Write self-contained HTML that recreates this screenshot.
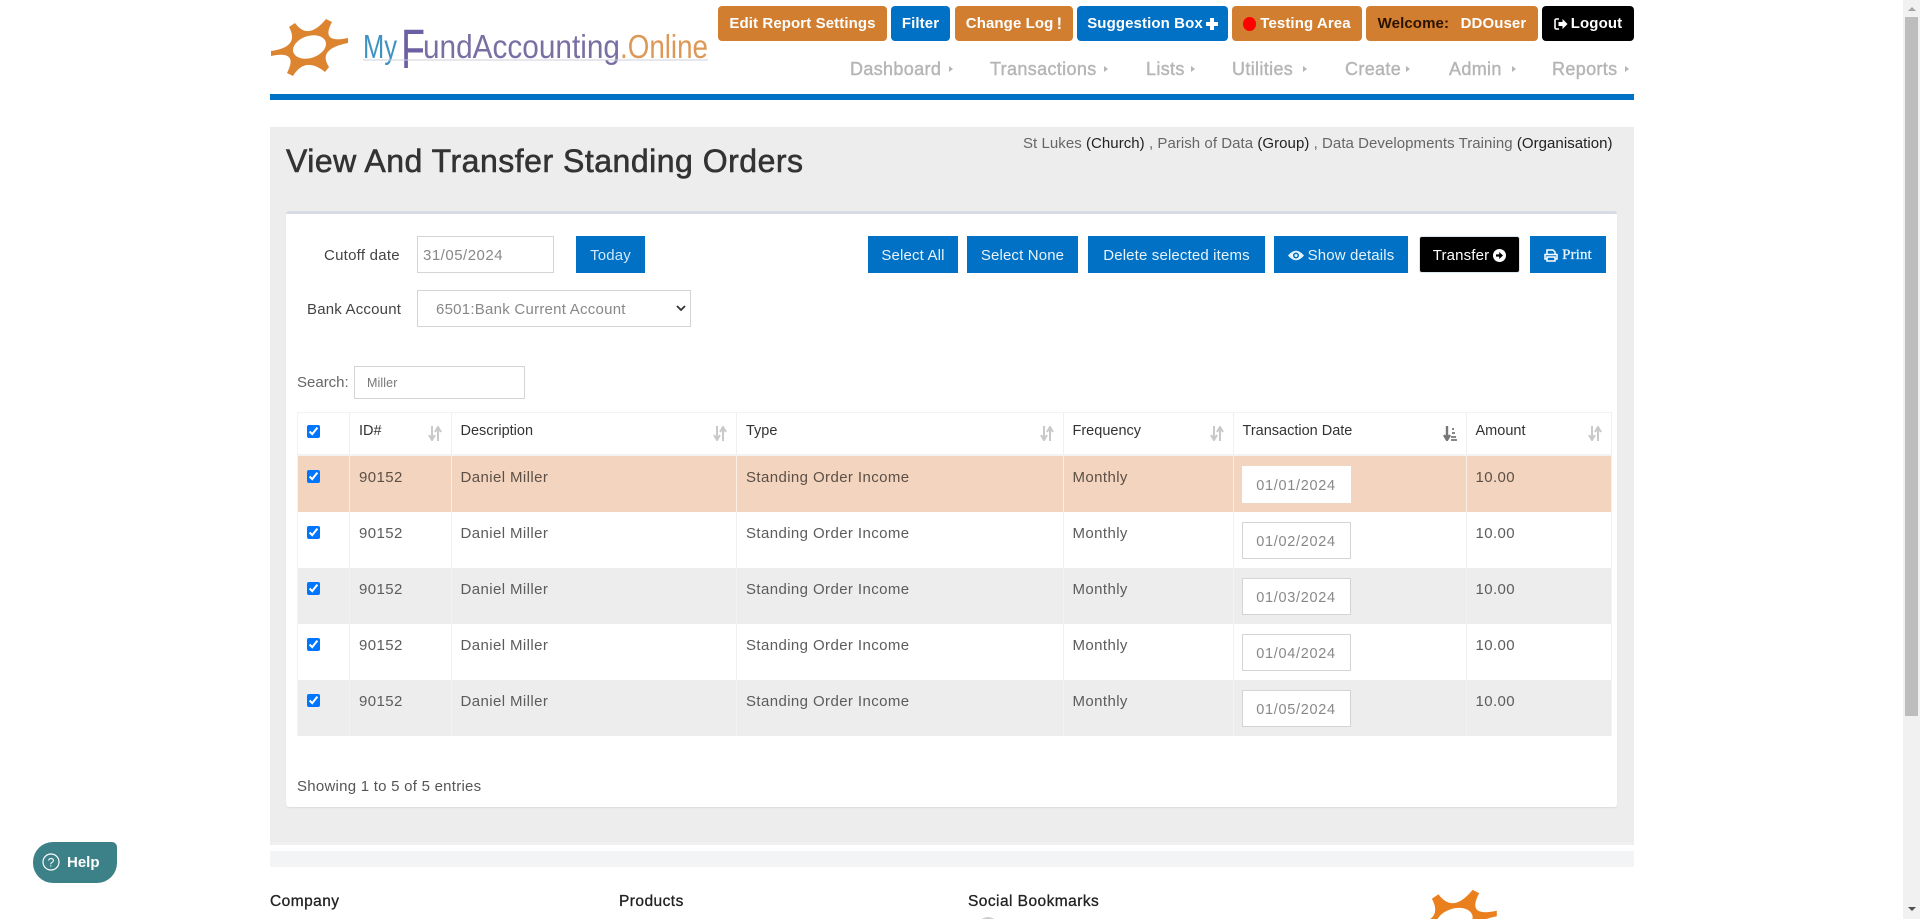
<!DOCTYPE html>
<html lang="en"><head><meta charset="utf-8"><title>View And Transfer Standing Orders</title>
<style>
*{box-sizing:border-box}
html,body{margin:0;padding:0;width:1920px;height:919px;overflow:hidden;background:#fff;font-family:"Liberation Sans",sans-serif;color:#444}
#w{position:relative;width:1920px;height:919px;overflow:hidden;background:#fff}
.a{position:absolute}
.t{position:absolute;white-space:nowrap;line-height:20px;height:20px}
.tb{position:absolute;top:6px;height:35px;border-radius:4px;color:#fff;font-weight:bold;font-size:15px;letter-spacing:.1px;display:flex;align-items:center;justify-content:center;white-space:nowrap;gap:3px;text-decoration:none}
.o{background:#d17e30}.b{background:#0071c5}.k{background:#000}
.nav{position:absolute;top:59px;line-height:20px;font-size:18px;color:#b5b5b5;white-space:nowrap;-webkit-text-stroke:.4px #b5b5b5;letter-spacing:.35px}
.ar{position:absolute;top:66px;width:0;height:0;border-left:4px solid #b5b5b5;border-top:3.5px solid transparent;border-bottom:3.5px solid transparent}
.btn{position:absolute;top:236px;height:37px;padding-top:1px;background:#0071c5;color:#e6f3fb;font-size:15px;letter-spacing:.15px;display:flex;align-items:center;justify-content:center;white-space:nowrap;gap:4px}
.inp{position:absolute;background:#fff;border:1px solid #d4d4d4;color:#888;font-size:15px;letter-spacing:.5px}
table{position:absolute;left:297px;top:412px;width:1315px;border-collapse:separate;border-spacing:0;table-layout:fixed;font-size:15px;letter-spacing:.4px}
th{height:44px;font-size:14.5px;letter-spacing:0;font-weight:normal;text-align:left;vertical-align:top;padding:8px 0 0 9px;color:#333;border-top:1px solid #f3f3f3;border-right:1px solid #f0f0f0;border-bottom:2px solid #f3f3f3;position:relative;line-height:20px}
th:first-child,td:first-child{border-left:1px solid #f3f3f3}
td{height:56px;vertical-align:top;padding:12px 0 0 9px;color:#5c5c5c;border-right:1px solid #f0f0f0;position:relative;line-height:20px}
tr.p td{background:#f3d5bf;border-right-color:#fbeee4;color:#5c4f46}
tr.g td{background:#eeedee;border-right-color:#f3f3f3}
input[type=checkbox]{position:absolute;left:9px;margin:0;width:13px;height:13px;accent-color:#0075ff}
.d{position:absolute;left:8px;top:10px;width:109px;height:37px;background:#fff;border:1px solid #d4d4d4;color:#888;text-align:center;line-height:35px;padding-top:2px;font-size:14.5px;letter-spacing:.7px}
tr.p .d{border-color:#fff}
.s{position:absolute;top:13px;right:9px}
.f{position:absolute;top:892px;white-space:nowrap;line-height:20px;font-size:15.5px;color:#222;-webkit-text-stroke:.3px #222;letter-spacing:.45px}
</style></head><body>
<div id="w">

<!-- logo -->
<svg class="a" style="left:270px;top:10px" width="450" height="70" viewBox="0 0 450 70">
<path d="M25 13Q38 31 56 9L62 12Q50 34 78 28L78 33Q47 39 59 57L55 62Q35 46 23 66L17 63Q29 40 1 46L1 41Q30 37 19 17Z" fill="#dc8430"/>
<ellipse cx="39.5" cy="37" rx="17" ry="11" transform="rotate(-18 39.5 37)" fill="#fff"/>
<text x="93" y="48" font-size="33" fill="#3f93c4" textLength="34" lengthAdjust="spacingAndGlyphs">My</text>
<text x="131" y="58" font-size="56" fill="#6c5fa2" textLength="24" lengthAdjust="spacingAndGlyphs">F</text>
<text x="153" y="48" font-size="33" fill="#7a6fa3" textLength="197" lengthAdjust="spacingAndGlyphs">undAccounting</text>
<text x="350" y="48" font-size="33" fill="#dd9858" textLength="88" lengthAdjust="spacingAndGlyphs">.Online</text>
<rect x="93" y="49.5" width="345" height="1" fill="#cdd0de"/>
</svg>

<!-- top buttons -->
<a class="tb o" style="left:718px;width:169px">Edit Report Settings</a>
<a class="tb b" style="left:891px;width:59px">Filter</a>
<a class="tb o" style="left:955px;width:118px">Change Log <b style="font-size:17px">!</b></a>
<a class="tb b" style="left:1077px;width:151px">Suggestion Box<svg width="12" height="12" viewBox="0 0 12 12"><path d="M4 0h4v4h4v4H8v4H4V8H0V4h4z" fill="#fff"/></svg></a>
<a class="tb o" style="left:1232px;width:130px;gap:4px"><span style="width:13px;height:14px;border-radius:50%;background:#f00"></span>Testing Area</a>
<a class="tb o" style="left:1366px;width:172px"><span style="color:#2a1200">Welcome:</span>&nbsp;&nbsp;DDOuser</a>
<a class="tb k" style="left:1542px;width:92px"><svg width="14" height="12" viewBox="0 0 14 12"><path d="M5 1H2.5Q1 1 1 2.5v7Q1 11 2.5 11H5" fill="none" stroke="#fff" stroke-width="1.6"/><path d="M4.5 4h4V1l5 5-5 5V8h-4z" fill="#fff"/></svg>Logout</a>

<!-- nav -->
<span class="nav" style="left:850px">Dashboard</span><i class="ar" style="left:949px"></i>
<span class="nav" style="left:990px">Transactions</span><i class="ar" style="left:1104px"></i>
<span class="nav" style="left:1146px">Lists</span><i class="ar" style="left:1191px"></i>
<span class="nav" style="left:1232px">Utilities</span><i class="ar" style="left:1303px"></i>
<span class="nav" style="left:1345px">Create</span><i class="ar" style="left:1406px"></i>
<span class="nav" style="left:1449px">Admin</span><i class="ar" style="left:1512px"></i>
<span class="nav" style="left:1552px">Reports</span><i class="ar" style="left:1625px"></i>

<div class="a" style="left:270px;top:94px;width:1364px;height:6px;background:#0071c5"></div>

<!-- panel -->
<div class="a" style="left:270px;top:127px;width:1364px;height:715px;background:#eeedee"></div>
<div class="a" style="left:270px;top:842px;width:1364px;height:3px;background:#f1f0f1"></div>
<div class="a" style="left:270px;top:851px;width:1364px;height:16px;background:#f3f4f6"></div>

<div class="t" style="left:286px;top:141px;height:40px;line-height:40px;font-size:32px;color:#333;-webkit-text-stroke:.6px #333;letter-spacing:.5px">View And Transfer Standing Orders</div>
<div class="t" style="left:1023px;top:134px;font-size:15px;color:#666;letter-spacing:.05px">St Lukes <span style="color:#222">(Church)</span> , Parish of Data <span style="color:#222">(Group)</span> , Data Developments Training <span style="color:#222">(Organisation)</span></div>

<!-- card -->
<div class="a" style="left:286px;top:211px;width:1331px;height:596px;background:#fff;border-top:3px solid #d8dbe3;border-radius:3px;box-shadow:0 1px 1px #ddd"></div>

<div class="t" style="left:324px;top:246px;font-size:15px;color:#444;letter-spacing:.25px">Cutoff date</div>
<div class="inp" style="left:417px;top:236px;width:137px;height:37px;padding:1px 5px 0;line-height:35px">31/05/2024</div>
<div class="btn" style="left:576px;width:69px;color:#cfe8fa">Today</div>
<div class="t" style="left:307px;top:300px;font-size:15px;color:#444;letter-spacing:.2px">Bank Account</div>
<div class="inp" style="left:417px;top:290px;width:274px;height:37px;padding:1px 18px 0;line-height:35px;letter-spacing:.25px">6501:Bank Current Account
<svg class="a" style="left:258px;top:14px" width="10" height="7" viewBox="0 0 10 7"><path d="M1 1l4 4 4-4" fill="none" stroke="#333" stroke-width="1.8"/></svg></div>

<div class="btn" style="left:868px;width:90px">Select All</div>
<div class="btn" style="left:967px;width:111px">Select None</div>
<div class="btn" style="left:1088px;width:177px">Delete selected items</div>
<div class="btn" style="left:1274px;width:134px"><svg width="16" height="11" viewBox="0 0 16 11"><path d="M0 5.5Q8-4 16 5.5 8 15 0 5.5z" fill="#e6f3fb"/><circle cx="8" cy="5.5" r="3" fill="#0071c5"/><circle cx="8" cy="5.5" r="1.5" fill="#e6f3fb"/></svg>Show details</div>
<div class="btn" style="left:1420px;top:237px;width:99px;height:35px;background:#000;color:#fff;border-radius:2px;box-shadow:0 0 0 1px #d8e6ee">Transfer<svg width="13" height="13" viewBox="0 0 13 13"><circle cx="6.5" cy="6.5" r="6.5" fill="#fff"/><path d="M3 5.4h3.2V3l3.8 3.5L6.2 10V7.6H3z" fill="#000"/></svg></div>
<div class="btn" style="left:1530px;width:76px;font-family:'Liberation Serif',serif;font-size:15px;letter-spacing:.1px;-webkit-text-stroke:.3px #e6f3fb"><svg width="14" height="13" viewBox="0 0 14 13"><path d="M3 5V1h6l2 2v2M3 10H1V5.5h12V10h-2M3 8h8v4H3z" fill="none" stroke="#fff" stroke-width="1.5"/></svg>Print</div>

<div class="t" style="left:297px;top:373px;font-size:15px;color:#666;letter-spacing:0">Search:</div>
<div class="inp" style="left:354px;top:366px;width:171px;height:33px;padding:1px 12px 0;line-height:31px;font-size:12.5px;letter-spacing:.1px;color:#777">Miller</div>

<table>
<colgroup><col style="width:53px"><col style="width:101.5px"><col style="width:285.5px"><col style="width:326.5px"><col style="width:170px"><col style="width:233px"><col style="width:145.5px"></colgroup>
<thead><tr>
<th><input type="checkbox" checked style="top:12px"></th>
<th>ID#<svg class="s" width="14" height="15" viewBox="0 0 14 15"><path d="M4 0v12M1 9l3 5 3-5M10 15V3M7 6l3-5 3 5" fill="none" stroke="#c9c9c9" stroke-width="2"/></svg></th>
<th>Description<svg class="s" width="14" height="15" viewBox="0 0 14 15"><path d="M4 0v12M1 9l3 5 3-5M10 15V3M7 6l3-5 3 5" fill="none" stroke="#c9c9c9" stroke-width="2"/></svg></th>
<th>Type<svg class="s" width="14" height="15" viewBox="0 0 14 15"><path d="M4 0v12M1 9l3 5 3-5M10 15V3M7 6l3-5 3 5" fill="none" stroke="#c9c9c9" stroke-width="2"/></svg></th>
<th>Frequency<svg class="s" width="14" height="15" viewBox="0 0 14 15"><path d="M4 0v12M1 9l3 5 3-5M10 15V3M7 6l3-5 3 5" fill="none" stroke="#c9c9c9" stroke-width="2"/></svg></th>
<th>Transaction Date<svg class="s" width="14" height="15" viewBox="0 0 14 15"><path d="M4 0v12M1 9l3 5 3-5" fill="none" stroke="#777" stroke-width="2.4"/><path d="M9 2h2v2H9zM9 6h3v2H9zM8 10h5v2H8zM8 13h6v2H8z" fill="#888"/></svg></th>
<th>Amount<svg class="s" width="14" height="15" viewBox="0 0 14 15"><path d="M4 0v12M1 9l3 5 3-5M10 15V3M7 6l3-5 3 5" fill="none" stroke="#c9c9c9" stroke-width="2"/></svg></th>
</tr></thead>
<tbody>
<tr class="p"><td><input type="checkbox" checked style="top:14px"></td><td>90152</td><td>Daniel Miller</td><td>Standing Order Income</td><td>Monthly</td><td><div class="d">01/01/2024</div></td><td>10.00</td></tr>
<tr><td><input type="checkbox" checked style="top:14px"></td><td>90152</td><td>Daniel Miller</td><td>Standing Order Income</td><td>Monthly</td><td><div class="d">01/02/2024</div></td><td>10.00</td></tr>
<tr class="g"><td><input type="checkbox" checked style="top:14px"></td><td>90152</td><td>Daniel Miller</td><td>Standing Order Income</td><td>Monthly</td><td><div class="d">01/03/2024</div></td><td>10.00</td></tr>
<tr><td><input type="checkbox" checked style="top:14px"></td><td>90152</td><td>Daniel Miller</td><td>Standing Order Income</td><td>Monthly</td><td><div class="d">01/04/2024</div></td><td>10.00</td></tr>
<tr class="g"><td><input type="checkbox" checked style="top:14px"></td><td>90152</td><td>Daniel Miller</td><td>Standing Order Income</td><td>Monthly</td><td><div class="d">01/05/2024</div></td><td>10.00</td></tr>
</tbody></table>

<div class="t" style="left:297px;top:777px;font-size:15px;color:#555;letter-spacing:.25px">Showing 1 to 5 of 5 entries</div>

<!-- footer -->
<div class="f" style="left:270px">Company</div>
<div class="f" style="left:619px">Products</div>
<div class="f" style="left:968px">Social Bookmarks</div>
<div class="a" style="left:978px;top:917px;width:20px;height:20px;border-radius:50%;background:#ccc"></div>
<svg class="a" style="left:1411px;top:880px" width="90" height="80" viewBox="0 0 90 80"><g transform="scale(1.1)"><path d="M25 13Q38 31 56 9L62 12Q50 34 78 28L78 33Q47 39 59 57L55 62Q35 46 23 66L17 63Q29 40 1 46L1 41Q30 37 19 17Z" fill="#ea7f1d"/><ellipse cx="39.5" cy="37" rx="17" ry="11" transform="rotate(-18 39.5 37)" fill="#fff"/></g></svg>

<!-- help -->
<div class="a" style="left:33px;top:842px;width:84px;height:41px;background:#3b8187;border-radius:20px 5px 20px 20px;color:#fff;font-weight:bold;font-size:15px;line-height:41px;padding-left:34px">Help
<svg class="a" style="left:9px;top:11px" width="18" height="18" viewBox="0 0 18 18"><circle cx="9" cy="9" r="8" fill="none" stroke="#fff" stroke-width="1.2"/><text x="9" y="13.5" text-anchor="middle" font-size="12" fill="#fff" font-weight="normal">?</text></svg></div>

<!-- scrollbar -->
<div class="a" style="left:1903px;top:0;width:17px;height:919px;background:#f1f1f1"></div>
<div class="a" style="left:1905px;top:17px;width:13px;height:699px;background:#bdbdbd"></div>
<div class="a" style="left:1908px;top:7px;width:0;height:0;border-left:4px solid transparent;border-right:4px solid transparent;border-bottom:4px solid #a3a3a3"></div>
<div class="a" style="left:1908px;top:907px;width:0;height:0;border-left:4px solid transparent;border-right:4px solid transparent;border-top:4px solid #505050"></div>
</div>
</body></html>
